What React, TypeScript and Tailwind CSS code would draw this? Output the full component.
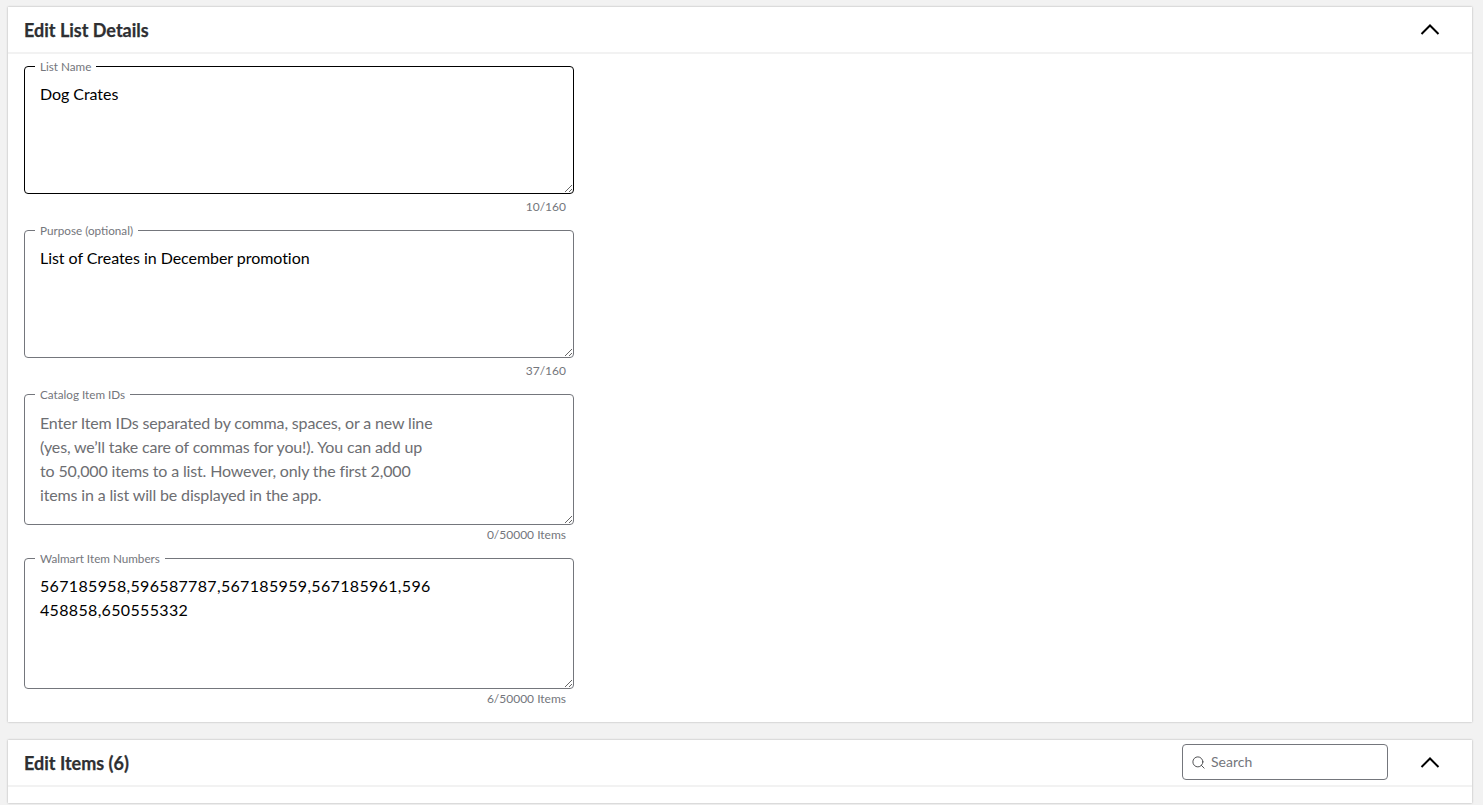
import type { ReactNode } from 'react'
import { Search } from 'lucide-react'

const font = "font-['Lato','Noto_Sans',sans-serif]"

type FieldProps = {
  label: string
  counter: string
  value?: string
  placeholder?: string
  tall?: boolean
  focused?: boolean
  digits?: boolean
}

function Field({ label, counter, value, placeholder, tall, focused, digits }: FieldProps) {
  return (
    <div className="w-[550px]">
      <div className="relative flex">
        <span className="absolute left-[11px] top-[-7px] bg-white px-[5px] text-[11.7px] leading-[14px] text-[#74767c]">
          {label}
        </span>
        <textarea
          readOnly
          defaultValue={value}
          placeholder={placeholder}
          className={`w-full rounded-[4px] border bg-white pl-[15px] pr-[135px] text-[16px] leading-[24px] text-black outline-none placeholder:tracking-[-0.15px] placeholder:text-[#6d6e72] ${
            placeholder ? 'pt-[16px]' : 'pt-[15px]'
          } ${digits ? 'tracking-[0.33px]' : 'tracking-[-0.05px]'} ${tall ? 'h-[131px]' : 'h-[128px]'} ${
            focused ? 'border-black' : 'border-[#74767c]'
          }`}
        />
      </div>
      <p
        className={`h-[14px] pr-[8px] text-right text-[12px] leading-[14px] text-[#74767c] ${
          tall ? 'mt-[3px]' : 'mt-[6px]'
        }`}
      >
        {counter}
      </p>
    </div>
  )
}

function Chevron() {
  return (
    <svg className="h-[28px] w-[28px] shrink-0" viewBox="0 0 28 28" fill="none" stroke="#000" strokeWidth="2">
      <path d="M5.5 18 14 9.5 22.5 18" />
    </svg>
  )
}

function CardHeader({ title, children }: { title: string; children?: ReactNode }) {
  return (
    <header className="flex h-[47px] items-center justify-between border-b-2 border-[#f2f2f2] pl-[16px] pr-[28px]">
      <h2 className="pt-[1px] text-[18px] font-bold text-[#2e2f32] [-webkit-text-stroke:0.25px_#2e2f32]">{title}</h2>
      <div className="flex items-center gap-[28px]">
        {children}
        <Chevron />
      </div>
    </header>
  )
}

export default function App() {
  return (
    <div className={`${font} flex h-screen flex-col gap-[18px] overflow-hidden bg-[#f2f2f2] pl-[8px] pr-[11px] pt-[7px]`}>
      {/* List details */}
      <section className="h-[715px] shrink-0 bg-white shadow-[0_0_2px_rgba(0,0,0,0.3)]">
        <CardHeader title="Edit List Details" />
        <div className="flex flex-col gap-[16px] pl-[16px] pt-[12px]">
          <Field label="List Name" counter="10/160" value="Dog Crates" focused />
          <Field label="Purpose (optional)" counter="37/160" value="List of Creates in December promotion" />
          <Field
            label="Catalog Item IDs"
            counter="0/50000 Items"
            tall
            placeholder="Enter Item IDs separated by comma, spaces, or a new line (yes, we’ll take care of commas for you!). You can add up to 50,000 items to a list. However, only the first 2,000 items in a list will be displayed in the app."
          />
          <Field
            label="Walmart Item Numbers"
            counter="6/50000 Items"
            tall
            digits
            value="567185958,596587787,567185959,567185961,596458858,650555332"
          />
        </div>
      </section>

      {/* Items */}
      <section className="h-[63px] shrink-0 bg-white shadow-[0_0_2px_rgba(0,0,0,0.3)]">
        <CardHeader title="Edit Items (6)">
          <label className="mb-[1px] flex h-[36px] w-[206px] items-center gap-[5px] rounded-[4px] border border-[#74767c] pl-[8px]">
            <Search className="h-[15px] w-[15px] text-[#46474a]" strokeWidth={1.5} />
            <input
              readOnly
              placeholder="Search"
              className="w-[150px] pb-[1px] text-[14px] outline-none placeholder:text-[#74767c]"
            />
          </label>
        </CardHeader>
      </section>
    </div>
  )
}
